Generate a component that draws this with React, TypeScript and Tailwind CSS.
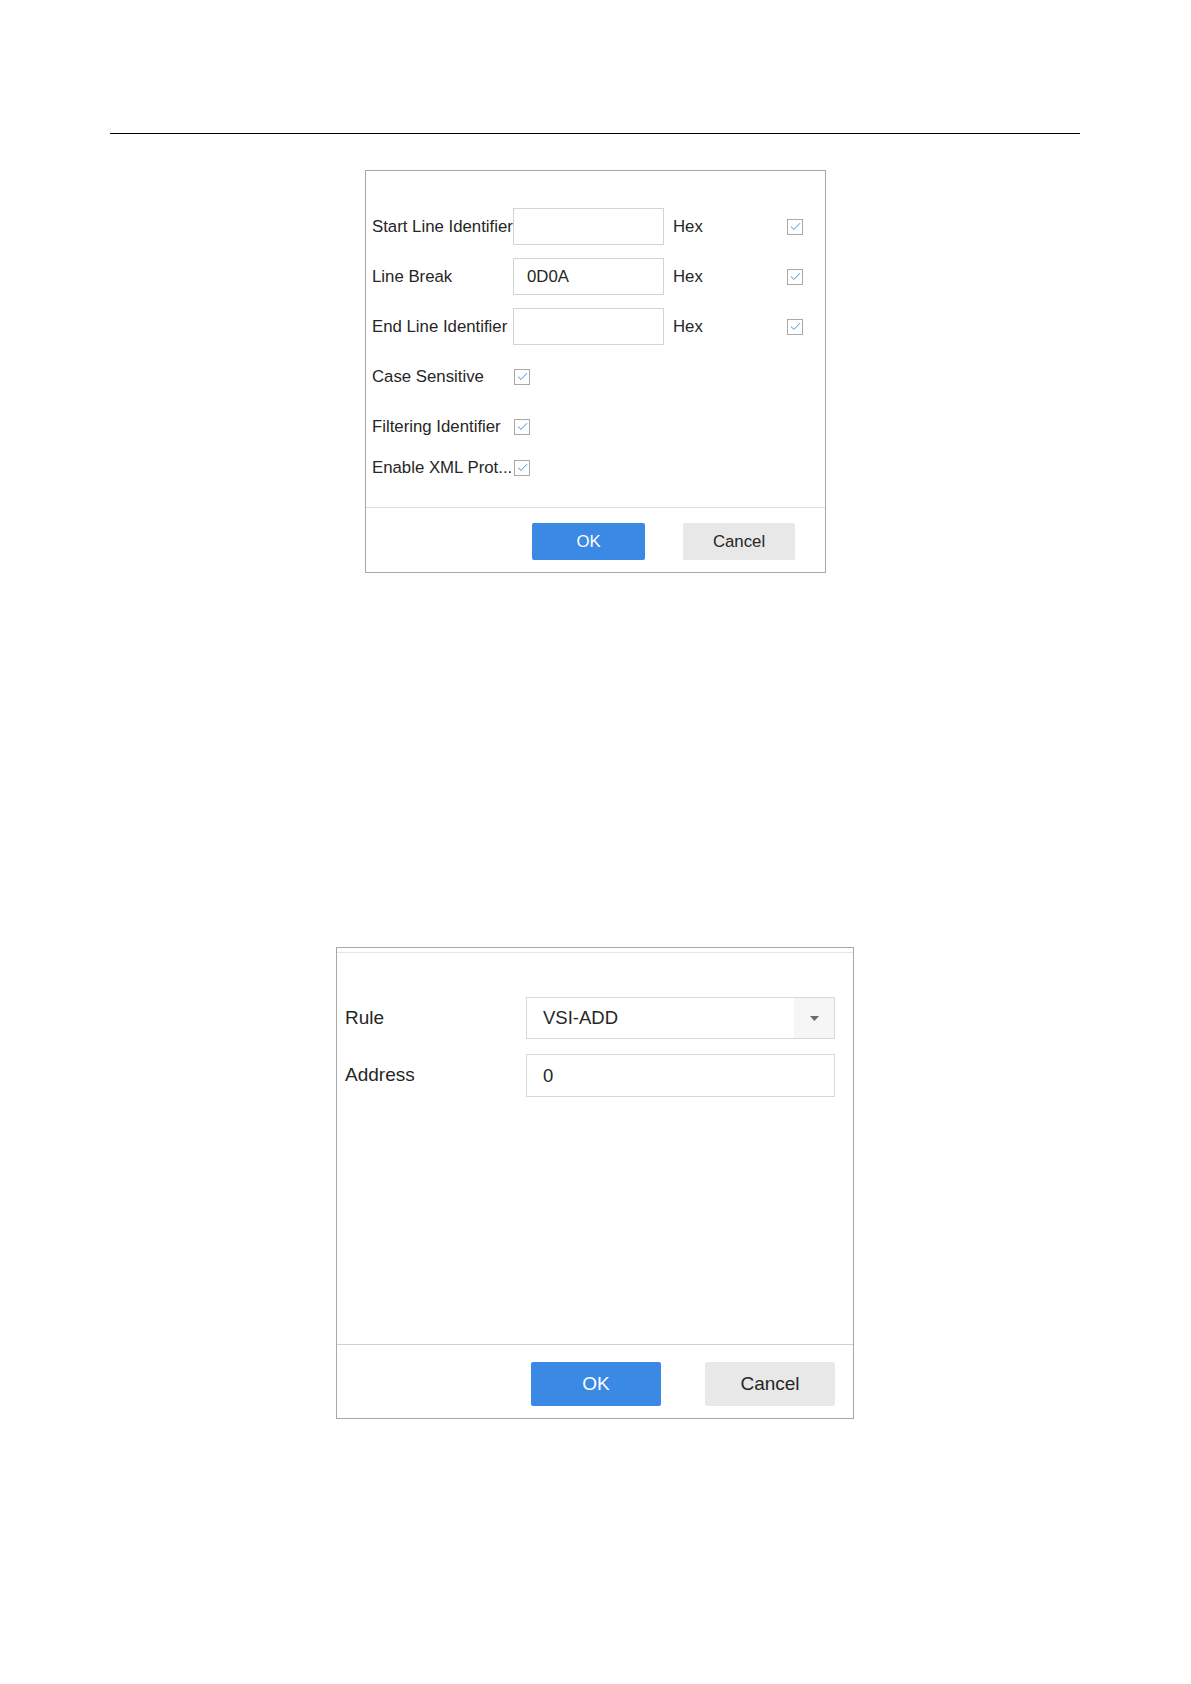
import React from "react";

const Check = () => (
  <span className="flex h-[16px] w-[16px] shrink-0 items-center justify-center border border-[#a9a9a9] bg-white">
    <svg width="11" height="9" viewBox="0 0 11 9" fill="none">
      <path d="M1 4.6 L4 7.4 L10 1.2" stroke="#4a8fe0" strokeWidth="1" />
    </svg>
  </span>
);

const hexRows = [
  { label: "Start Line Identifier", value: "" },
  { label: "Line Break", value: "0D0A" },
  { label: "End Line Identifier", value: "" },
];

const SerialDialog = () => (
  <div className="ml-[365px] mt-[36px] flex h-[403px] w-[461px] flex-col border border-[#a8a8a8] text-[16.8px] text-[#262626]">
    <div className="flex flex-1 flex-col pl-[6px] pr-[22px] pt-[37px]">
      {hexRows.map((r) => (
        <div key={r.label} className="mb-[13px] flex h-[37px] items-center">
          <span className="w-[141px] shrink-0 whitespace-nowrap">{r.label}</span>
          <div className="flex h-[37px] w-[151px] items-center border border-[#d4d4d4] pl-[13px]">{r.value}</div>
          <span className="ml-[9px]">Hex</span>
          <div className="ml-auto">
            <Check />
          </div>
        </div>
      ))}
      <div className="mb-[13px] flex h-[37px] items-center">
        <span className="w-[142px] shrink-0">Case Sensitive</span>
        <Check />
      </div>
      <div className="flex h-[37px] items-center">
        <span className="w-[142px] shrink-0">Filtering Identifier</span>
        <Check />
      </div>
      <div className="mt-[4px] flex h-[37px] items-center">
        <span className="w-[142px] shrink-0 whitespace-nowrap">Enable XML Prot...</span>
        <Check />
      </div>
    </div>
    <div className="flex h-[65px] items-start justify-end gap-[38px] border-t border-[#dedede] pr-[30px] pt-[15px]">
      <button className="h-[37px] w-[113px] rounded-[2px] bg-[#3a89e5] text-white">OK</button>
      <button className="h-[37px] w-[112px] rounded-[2px] bg-[#e8e8e8] text-[#262626]">Cancel</button>
    </div>
  </div>
);

const RuleDialog = () => (
  <div className="ml-[336px] mt-[374px] flex h-[472px] w-[518px] flex-col border border-[#a8a8a8] text-[19px] text-[#262626]">
    <div className="h-[5px] border-b border-[#e6e6e6]" />
    <div className="flex flex-1 flex-col gap-[15px] pl-[8px] pr-[18px] pt-[44px]">
      <div className="flex h-[42px] items-center">
        <span className="w-[181px] shrink-0">Rule</span>
        <div className="flex h-[42px] flex-1 items-center border border-[#d8d8d8]">
          <span className="flex-1 pl-[16px] text-[18.5px]">VSI-ADD</span>
          <div className="flex h-full w-[40px] items-center justify-center bg-[#f6f6f6]">
            <svg width="9" height="5" viewBox="0 0 9 5">
              <path d="M0 0 H9 L4.5 5 Z" fill="#6b6b6b" />
            </svg>
          </div>
        </div>
      </div>
      <div className="flex h-[43px] items-center">
        <span className="w-[181px] shrink-0">Address</span>
        <div className="flex h-[43px] flex-1 items-center border border-[#d8d8d8] pl-[16px] text-[18.5px]">0</div>
      </div>
    </div>
    <div className="flex h-[74px] items-start justify-end gap-[44px] border-t border-[#cfcfcf] pr-[18px] pt-[17px]">
      <button className="h-[44px] w-[130px] rounded-[2px] bg-[#3a89e5] text-white">OK</button>
      <button className="h-[44px] w-[130px] rounded-[2px] bg-[#e8e8e8] text-[#262626]">Cancel</button>
    </div>
  </div>
);

export default function App() {
  return (
    <div className="min-h-[1684px] w-[1191px] bg-white pt-[133px] font-['Liberation_Sans',Arial,sans-serif]">
      <div className="ml-[110px] w-[970px] border-t-[1.5px] border-black" />
      <SerialDialog />
      <RuleDialog />
    </div>
  );
}
